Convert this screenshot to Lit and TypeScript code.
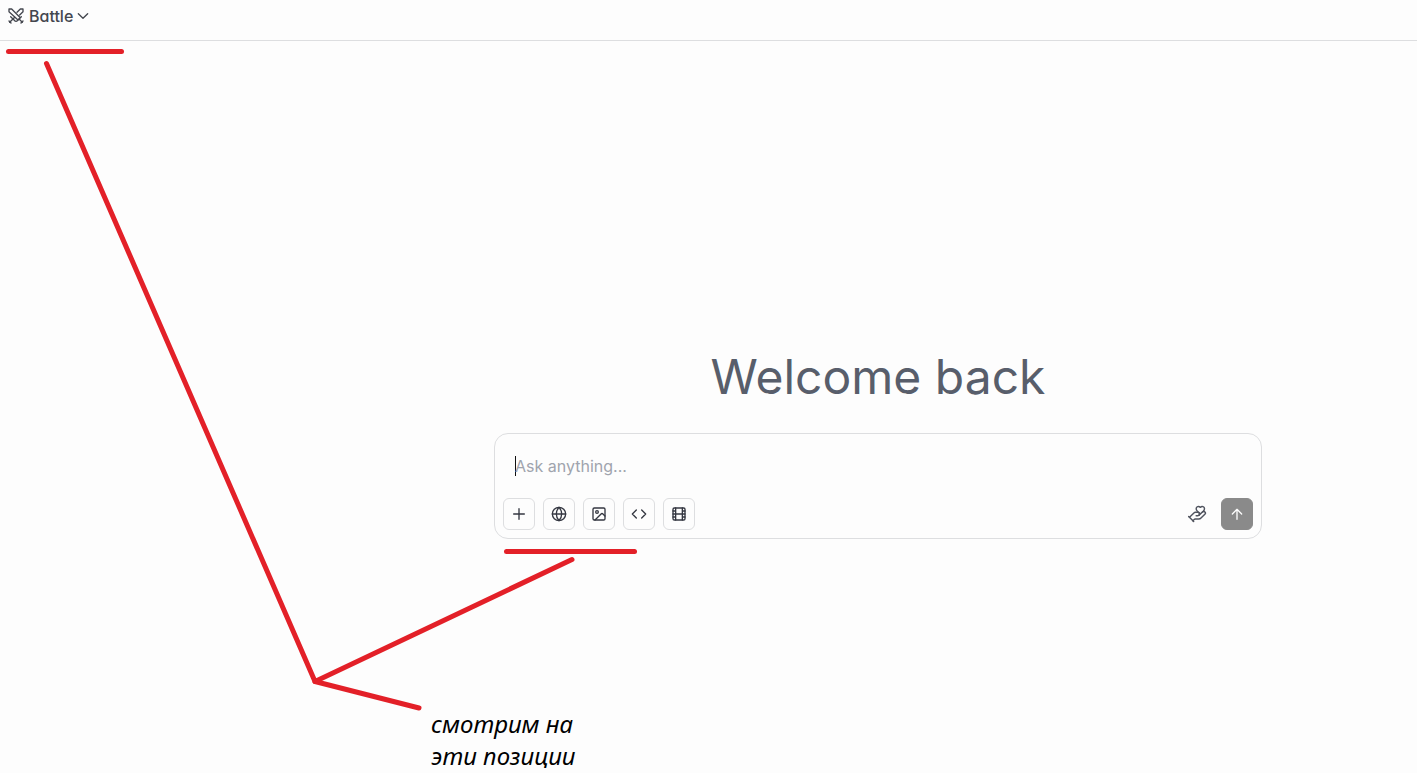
import { LitElement, html, css, svg } from "lit";
import { customElement, property } from "lit/decorators.js";

const icons = {
  swords: svg`<path d="M15 18 1.500 5.500V1.500H5.500L18.500 14.500"/><path d="m13 20 7-7"/><path d="m16.500 16.500 5 5"/><path d="m19.500 22.500 3-3"/><path d="M13.500 6.500 18.500 1.500h4V5.500l-5 5"/><path d="m4 13 7 7"/><path d="m7.500 16.500-5 5"/><path d="m1.500 19.500 3 3"/><path d="m10 14-2 2"/>`,
  chevron: svg`<path d="m5 8.500 7 7 7-7"/>`,
  plus: svg`<path d="M4 12h16M12 4v16"/>`,
  globe: svg`<circle cx="12" cy="12" r="10"/><path d="M12 2a14.5 14.5 0 0 0 0 20 14.5 14.5 0 0 0 0-20"/><path d="M2 12h20"/>`,
  image: svg`<rect x="3" y="3" width="18" height="18" rx="2"/><circle cx="9" cy="9" r="2"/><path d="m21 15-3.086-3.086a2 2 0 0 0-2.828 0L6 21"/>`,
  code: svg`<path d="m16 18 6-6-6-6M8 6l-6 6 6 6"/>`,
  film: svg`<rect x="3" y="3" width="18" height="18" rx="2"/><path d="M7 3v18M17 3v18M3 7.5h4M3 12h18M3 16.5h4M17 7.5h4M17 16.5h4"/>`,
  handHeart: svg`<path d="M11 14h2a2 2 0 0 0 0-4h-3c-.6 0-1.1.2-1.4.6L3 16"/><path d="m14.45 13.39 5.05-4.694C20.196 8 21 6.85 21 5.75a2.75 2.75 0 0 0-4.797-1.837.276.276 0 0 1-.406 0A2.75 2.75 0 0 0 11 5.75c0 1.2.802 2.248 1.5 2.946L16 11.95"/><path d="m2 15 6 6"/><path d="m7 20 1.6-1.4c.3-.4.8-.6 1.4-.6h4c1.1 0 2.1-.4 2.8-1.2l4.6-4.4a1 1 0 0 0-2.75-2.91"/>`,
  arrowUp: svg`<path d="m5 12 7-7 7 7M12 20V5"/>`,
};

type IconName = keyof typeof icons;

@customElement("ui-icon")
class UiIcon extends LitElement {
  static styles = css`
    :host { display: block; width: 16px; height: 16px; flex: none; }
    svg { display: block; width: 100%; height: 100%; fill: none; stroke: currentColor; stroke-width: var(--icon-stroke, 2); stroke-linecap: round; stroke-linejoin: round; }
  `;
  @property() name: IconName = "plus";
  render() {
    return html`<svg viewBox="0 0 24 24" aria-hidden="true">${icons[this.name]}</svg>`;
  }
}

@customElement("chat-composer")
class ChatComposer extends LitElement {
  static styles = css`
    :host { display: block; width: 100%; max-width: 768px; }
    .box { box-sizing: border-box; display: flex; flex-direction: column; gap: 8px; padding: 8px; border: 1px solid #dddee0; border-radius: 14px; background: #fdfdfd; }
    .field { display: flex; align-items: center; padding: 12px; height: 24px; }
    .caret { width: 1px; height: 20px; margin-right: -1px; background: #111; flex: none; }
    textarea { flex: 1; min-width: 0; height: 24px; box-sizing: border-box; margin: 0; padding: 0; border: 0; outline: 0; resize: none; overflow: hidden; background: transparent; color: #25272d; font: 400 16px/24px Inter, sans-serif; }
    textarea::placeholder { color: #a0a4ad; opacity: 1; }
    .bar, .group { display: flex; align-items: center; gap: 8px; }
    .bar { justify-content: space-between; }
    button { display: grid; place-items: center; box-sizing: border-box; width: 32px; height: 32px; margin: 0; padding: 0; border: 1px solid #dddee0; border-radius: 6px; background: #fdfdfd; color: #343741; }
    .plain { border-color: transparent; background: transparent; color: #50545f; --icon-stroke: 1.75; }
    .plain ui-icon { width: 20px; height: 20px; }
    .send { border-color: #8a8a8a; background: #8a8a8a; color: #fdfdfd; }
  `;
  private tools: { icon: IconName; label: string }[] = [
    { icon: "plus", label: "Add files" },
    { icon: "globe", label: "Search" },
    { icon: "image", label: "Image" },
    { icon: "code", label: "Code" },
    { icon: "film", label: "Video" },
  ];
  render() {
    return html`<form class="box" @submit=${(e: Event) => e.preventDefault()}>
      <div class="field">
        <span class="caret"></span>
        <textarea rows="1" aria-label="Message" placeholder="Ask anything..."></textarea>
      </div>
      <div class="bar">
        <div class="group">
          ${this.tools.map((t) => html`<button type="button" aria-label=${t.label}><ui-icon name=${t.icon}></ui-icon></button>`)}
        </div>
        <div class="group">
          <button class="plain" type="button" aria-label="Support"><ui-icon name="handHeart"></ui-icon></button>
          <button class="send" type="submit" aria-label="Send"><ui-icon name="arrowUp"></ui-icon></button>
        </div>
      </div>
    </form>`;
  }
}

@customElement("app-root")
class AppRoot extends LitElement {
  static styles = css`
    :host { display: flex; flex-direction: column; position: relative; min-height: 100vh; overflow: hidden; background: #fdfdfd; font-family: Inter, sans-serif; }
    header { display: flex; align-items: center; box-sizing: border-box; height: 41px; padding: 0 8px 8px; border-bottom: 1px solid #dddee0; }
    .mode { display: flex; align-items: center; gap: 5px; margin: 0; padding: 0; border: 0; background: transparent; color: #44474f; font: 500 16px/24px Inter, sans-serif; font-feature-settings: "cv11"; }
    .mode-label { display: flex; align-items: center; gap: 2px; }
    main { flex: 1; display: flex; flex-direction: column; align-items: center; justify-content: center; gap: 32px; padding: 78px 0 0 339px; }
    h1 { margin: 0; color: #585e6b; font-weight: 400; font-size: 48px; line-height: 48px; }
    .marks { position: absolute; top: 0; left: 0; width: 1417px; height: 773px; pointer-events: none; fill: none; stroke: #e32028; stroke-width: 5; stroke-linecap: round; stroke-linejoin: round; }
    .note { position: absolute; top: 708px; left: 431px; margin: 0; color: #000; font: italic 400 24px/32px "Noto Sans", sans-serif; white-space: nowrap; }
  `;
  render() {
    return html`
      <header>
        <button class="mode" type="button"><ui-icon name="swords"></ui-icon><span class="mode-label">Battle<ui-icon name="chevron"></ui-icon></span></button>
      </header>
      <main>
        <h1>Welcome back</h1>
        <chat-composer></chat-composer>
      </main>
      <svg class="marks" viewBox="0 0 1417 773" aria-hidden="true">
        <path d="M8.500 51.500H121.500"/>
        <path d="M46.500 63.500 315 681.500 572 559.500"/>
        <path d="M315 681.500 419 708"/>
        <path d="M506.500 551.500H634.500"/>
      </svg>
      <p class="note">смотрим на<br />эти позиции</p>
    `;
  }
}
